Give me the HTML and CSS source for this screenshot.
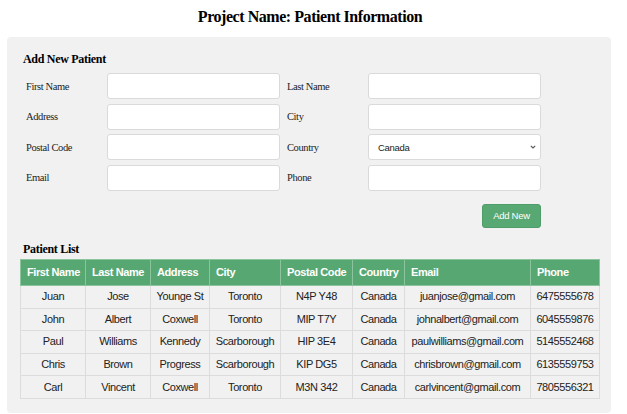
FILE: index.html
```html
<!DOCTYPE html>
<html>
<head>
<meta charset="utf-8">
<link rel="stylesheet" href="styles.css">
</head>
<body>
<h1 class="title">Project Name: Patient Information</h1>
<div class="panel">
  <h2 class="section">Add New Patient</h2>
  <form class="form">
    <label class="lbl">First Name</label><input class="field" type="text">
    <label class="lbl">Last Name</label><input class="field" type="text">
    <label class="lbl">Address</label><input class="field" type="text">
    <label class="lbl">City</label><input class="field" type="text">
    <label class="lbl">Postal Code</label><input class="field" type="text">
    <label class="lbl">Country</label>
    <div class="field select"><span>Canada</span>
      <svg width="8" height="6" viewBox="0 0 8 6"><path d="M1.8 1.8 L4 4 L6.2 1.8" fill="none" stroke="#555" stroke-width="1.1"/></svg>
    </div>
    <label class="lbl">Email</label><input class="field" type="text">
    <label class="lbl">Phone</label><input class="field" type="text">
  </form>
  <div class="actions"><button class="btn" type="button">Add New</button></div>
  <h2 class="section list">Patient List</h2>
  <table class="tbl">
    <colgroup>
      <col style="width:65px"><col style="width:65px"><col style="width:59px"><col style="width:71px"><col style="width:72px"><col style="width:52px"><col style="width:126px"><col style="width:69px">
    </colgroup>
    <thead>
      <tr><th>First Name</th><th>Last Name</th><th>Address</th><th>City</th><th>Postal Code</th><th>Country</th><th>Email</th><th>Phone</th></tr>
    </thead>
    <tbody>
      <tr><td>Juan</td><td>Jose</td><td>Younge St</td><td>Toronto</td><td>N4P Y48</td><td>Canada</td><td>juanjose@gmail.com</td><td>6475555678</td></tr>
      <tr><td>John</td><td>Albert</td><td>Coxwell</td><td>Toronto</td><td>MIP T7Y</td><td>Canada</td><td>johnalbert@gmail.com</td><td>6045559876</td></tr>
      <tr><td>Paul</td><td>Williams</td><td>Kennedy</td><td>Scarborough</td><td>HIP 3E4</td><td>Canada</td><td>paulwilliams@gmail.com</td><td>5145552468</td></tr>
      <tr><td>Chris</td><td>Brown</td><td>Progress</td><td>Scarborough</td><td>KIP DG5</td><td>Canada</td><td>chrisbrown@gmail.com</td><td>6135559753</td></tr>
      <tr><td>Carl</td><td>Vincent</td><td>Coxwell</td><td>Toronto</td><td>M3N 342</td><td>Canada</td><td>carlvincent@gmail.com</td><td>7805556321</td></tr>
    </tbody>
  </table>
</div>
</body>
</html>
```

FILE: styles.css
```css
html, body {
  margin: 0;
  padding: 0;
  background: #ffffff;
}
body {
  font-family: "Liberation Serif", "Times New Roman", serif;
  color: #111;
}
.title {
  margin: 0;
  padding-top: 8px;
  height: 29px;
  width: 620px;
  text-align: center;
  font-size: 16px;
  letter-spacing: -0.45px;
  line-height: 18px;
  font-weight: bold;
  color: #000;
}
.panel {
  margin: 0 16px 0 7px;
  background: #f1f1f1;
  border-radius: 4px;
  padding: 14px 12px 14px 13px;
}
.section {
  margin: 0 0 0 3px;
  font-size: 12px;
  letter-spacing: -0.3px;
  line-height: 16px;
  font-weight: bold;
  color: #000;
}
.form {
  margin: 6px 0 0 3px;
  display: grid;
  grid-template-columns: 84px 177px 84px 173px;
  grid-auto-rows: 26px;
  row-gap: 4.67px;
  align-items: center;
}
.lbl {
  font-size: 10.5px;
  letter-spacing: -0.4px;
  color: #222;
  padding-left: 3px;
}
.field {
  width: 173px;
  height: 26px;
  box-sizing: border-box;
  border: 1px solid #dadada;
  border-radius: 3px;
  background: #fff;
  margin: 0;
  padding: 0 6px;
  font-family: "Liberation Sans", Arial, sans-serif;
}
.select {
  display: flex;
  align-items: center;
  justify-content: space-between;
  padding: 0 3px 0 9px;
  font-size: 9.5px;
  letter-spacing: -0.3px;
  color: #222;
}
.actions {
  display: flex;
  justify-content: flex-end;
  width: 521px;
  margin-top: 13px;
}
.btn {
  width: 59px;
  height: 24px;
  background: #58a873;
  color: #fff;
  border: 1px solid #4f9d69;
  border-radius: 3px;
  font-family: "Liberation Sans", Arial, sans-serif;
  font-size: 9.5px;
  letter-spacing: -0.3px;
  padding: 0;
}
.section.list {
  margin-top: 13px;
}
.tbl {
  margin-top: 2px;
  border-collapse: collapse;
  table-layout: fixed;
  width: 579px;
  font-family: "Liberation Sans", Arial, sans-serif;
  font-size: 11px;
  letter-spacing: -0.4px;
  line-height: 13px;
}
.tbl thead tr {
  height: 26px;
}
.tbl th {
  background: #57a773;
  color: #fff;
  font-weight: bold;
  text-align: left;
  padding: 0 6px;
  border: 1px solid #8cc49d;
  white-space: nowrap;
}
.tbl tbody tr {
  height: 22.6px;
}
.tbl td {
  text-align: center;
  padding: 0;
  border: 1px solid #dcdcdc;
  color: #222;
  white-space: nowrap;
}
```
